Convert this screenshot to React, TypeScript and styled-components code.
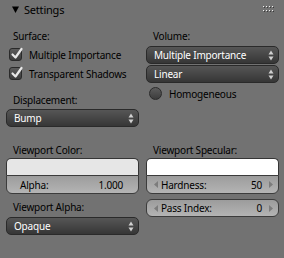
import React from 'react';
import styled, { createGlobalStyle } from 'styled-components';

const Global = createGlobalStyle`
  body {
    margin: 0;
    background: #727272;
  }
`;

const Panel = styled.div`
  width: 284px;
  height: 258px;
  background: #727272;
  font-family: 'Noto Sans', 'Open Sans', sans-serif;
  font-size: 10px;
  letter-spacing: -0.2px;
  color: #000;
  overflow: hidden;
`;

const Header = styled.div`
  height: 18px;
  display: flex;
  align-items: center;
  padding: 0 9px 0 12px;
  font-size: 11px;
`;

const HeaderTitle = styled.span`
  margin-left: 5px;
  flex: 1;
`;

const Columns = styled.div`
  display: grid;
  grid-template-columns: 133px 133px;
  column-gap: 7px;
  padding: 0 5px 0 6px;
  align-items: start;
`;

const Column = styled.div`
  display: flex;
  flex-direction: column;
`;

const Label = styled.div<{ $top?: number }>`
  height: 16px;
  display: flex;
  align-items: center;
  padding-left: 7px;
  margin-top: ${(p) => p.$top ?? 0}px;
`;

const CheckRow = styled.div<{ $top?: number }>`
  height: 19px;
  display: flex;
  align-items: center;
  padding-left: 3px;
  margin-top: ${(p) => p.$top ?? 0}px;
`;

const CheckBox = styled.span<{ $round?: boolean }>`
  position: relative;
  width: 13px;
  height: 13px;
  box-sizing: border-box;
  border: 1px solid #2a2a2a;
  border-radius: ${(p) => (p.$round ? '50%' : '3px')};
  background: linear-gradient(#5c5c5c, #3c3c3c);
  margin-right: 7px;
  flex: none;
  svg {
    position: absolute;
    left: 0px;
    top: -2px;
  }
`;

const Dropdown = styled.div<{ $top?: number }>`
  height: 18px;
  box-sizing: border-box;
  border: 1px solid #2a2a2a;
  border-radius: 5px;
  background: linear-gradient(#565656, #363636);
  color: #fff;
  display: flex;
  align-items: center;
  padding: 0 4px 0 7px;
  margin-top: ${(p) => p.$top ?? 0}px;
  span {
    flex: 1;
  }
`;

const ColorBlock = styled.div<{ $top?: number }>`
  margin-top: ${(p) => p.$top ?? 0}px;
  display: flex;
  flex-direction: column;
`;

const Swatch = styled.div<{ $color: string }>`
  height: 17px;
  box-sizing: border-box;
  border: 1px solid #353535;
  border-bottom: none;
  border-radius: 5px 5px 0 0;
  background: ${(p) => p.$color};
`;

const NumField = styled.div<{ $joined?: boolean; $top?: number; $slider?: boolean }>`
  height: ${(p) => (p.$joined ? 19 : 18)}px;
  box-sizing: border-box;
  border: 1px solid #3c3c3c;
  border-radius: ${(p) => (p.$joined ? '0 0 6px 6px' : '6px')};
  background: linear-gradient(#9c9c9c, #b4b4b4);
  display: flex;
  align-items: center;
  padding: ${(p) => (p.$slider ? '0 15px 0 13px' : '0 5px 0 7px')};
  margin-top: ${(p) => p.$top ?? 0}px;
  span.name {
    flex: 1;
  }
`;

const ArrowBox = styled.span<{ $side: 'left' | 'right' }>`
  display: flex;
  align-items: center;
  margin: ${(p) => (p.$side === 'left' ? '0 3px 0 0' : '0 0 0 7px')};
`;

const Arrow = ({ side }: { side: 'left' | 'right' }) => (
  <ArrowBox $side={side}>
    <svg width="4" height="7" viewBox="0 0 4 7">
      <path
        d={side === 'left' ? 'M4 0 L0 3.5 L4 7 Z' : 'M0 0 L4 3.5 L0 7 Z'}
        fill="#7c7c7c"
      />
    </svg>
  </ArrowBox>
);

const Updown = () => (
  <svg width="6" height="11" viewBox="0 0 6 11">
    <path d="M0.5 4.5 L3 0.5 L5.5 4.5 Z" fill="#d0d0d0" />
    <path d="M0.5 6.5 L3 10.5 L5.5 6.5 Z" fill="#d0d0d0" />
  </svg>
);

const Check = () => (
  <svg width="15" height="14" viewBox="0 0 15 14">
    <path
      d="M2.5 7.5 L5.5 10.5 L11.5 2"
      stroke="#e8e8e8"
      strokeWidth="2.2"
      fill="none"
      strokeLinecap="round"
      strokeLinejoin="round"
    />
  </svg>
);

const Grip = () => (
  <svg width="12" height="7" viewBox="0 0 12 7">
    {[0, 3, 6, 9].map((x) =>
      [0, 4].map((y) => (
        <g key={`${x}-${y}`}>
          <rect x={x + 1} y={y + 1} width="1" height="1" fill="#3a3a3a" />
          <rect x={x} y={y} width="1" height="1" fill="#f0f0f0" />
        </g>
      ))
    )}
  </svg>
);

const Triangle = () => (
  <svg width="7" height="7" viewBox="0 0 7 7">
    <path d="M0 0.5 L7 0.5 L3.5 7 Z" fill="#000" />
  </svg>
);

const Select = ({ text, top }: { text: string; top?: number }) => (
  <Dropdown $top={top}>
    <span>{text}</span>
    <Updown />
  </Dropdown>
);

const App = () => {
  return (
    <Panel>
      <Global />
      <Header>
        <Triangle />
        <HeaderTitle>Settings</HeaderTitle>
        <Grip />
      </Header>
      <Columns>
        <Column>
          <Label $top={10}>Surface:</Label>
          <CheckRow $top={1}>
            <CheckBox>
              <Check />
            </CheckBox>
            Multiple Importance
          </CheckRow>
          <CheckRow>
            <CheckBox>
              <Check />
            </CheckBox>
            Transparent Shadows
          </CheckRow>
          <Label $top={9}>Displacement:</Label>
          <Select text="Bump" top={1} />
        </Column>
        <Column>
          <Label $top={10}>Volume:</Label>
          <Select text="Multiple Importance" top={2} />
          <Select text="Linear" top={1} />
          <CheckRow $top={1}>
            <CheckBox $round />
            Homogeneous
          </CheckRow>
        </Column>
      </Columns>
      <Columns>
        <Column>
          <Label $top={15}>Viewport Color:</Label>
          <ColorBlock>
            <Swatch $color="#e6e6e6" />
            <NumField $joined $slider>
              <span className="name">Alpha:</span>
              <span>1.000</span>
            </NumField>
          </ColorBlock>
          <Label $top={5}>Viewport Alpha:</Label>
          <Select text="Opaque" top={2} />
        </Column>
        <Column>
          <Label $top={15}>Viewport Specular:</Label>
          <ColorBlock>
            <Swatch $color="#ffffff" />
            <NumField $joined>
              <Arrow side="left" />
              <span className="name">Hardness:</span>
              <span>50</span>
              <Arrow side="right" />
            </NumField>
          </ColorBlock>
          <NumField $top={5}>
            <Arrow side="left" />
            <span className="name">Pass Index:</span>
            <span>0</span>
            <Arrow side="right" />
          </NumField>
        </Column>
      </Columns>
    </Panel>
  );
};

export default App;
